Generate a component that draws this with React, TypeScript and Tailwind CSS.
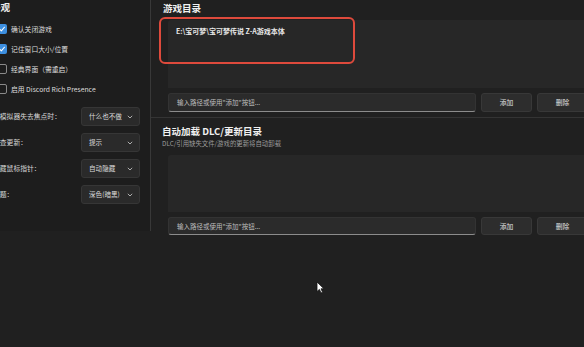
import React from "react";

const font = { fontFamily: '"Noto Sans CJK SC", "Noto Sans", sans-serif' };

function Check({ checked }: { checked: boolean }) {
  return checked ? (
    <div className="w-[10px] h-[10px] rounded-[2px] bg-[#3d8fe0] flex items-center justify-center shrink-0">
      <svg width="8" height="8" viewBox="0 0 10 10">
        <path d="M2 5.2 L4.2 7.3 L8 2.8" stroke="white" strokeWidth="1.4" fill="none" strokeLinecap="round" strokeLinejoin="round" />
      </svg>
    </div>
  ) : (
    <div className="w-[10px] h-[10px] rounded-[2px] border border-[#8a8a8a] shrink-0" />
  );
}

function Select({ value }: { value: string }) {
  return (
    <div className="w-[59px] h-[19px] rounded-[3px] bg-[#2a2a2a] border border-[#363636] flex items-center justify-between pl-[7px] pr-[6px] shrink-0">
      <span className="text-[6.6px] text-[#dcdcdc] leading-none whitespace-nowrap">{value}</span>
      <svg width="6" height="4" viewBox="0 0 6 4">
        <path d="M0.8 0.8 L3 3 L5.2 0.8" stroke="#bdbdbd" strokeWidth="0.9" fill="none" />
      </svg>
    </div>
  );
}

function InputRow({ h }: { h: number }) {
  return (
    <div className="flex ml-[17px] gap-[5px]" style={{ height: h }}>
      <div className="w-[308px] shrink-0 rounded-[3px] bg-[#2b2b2b] border border-[#333] border-b-[#8c8c8c] flex items-center pl-[8px]">
        <span className="text-[6.5px] text-[#bdbdbd] whitespace-nowrap leading-none">输入路径或使用"添加"按钮...</span>
      </div>
      <div className="w-[51px] shrink-0 rounded-[3px] bg-[#2d2d2d] border border-[#383838] flex items-center justify-center">
        <span className="text-[6.8px] text-[#e0e0e0] leading-none">添加</span>
      </div>
      <div className="w-[51px] shrink-0 rounded-[3px] bg-[#2d2d2d] border border-[#383838] flex items-center justify-center">
        <span className="text-[6.8px] text-[#e0e0e0] leading-none">删除</span>
      </div>
    </div>
  );
}

export default function App() {
  const checks: [boolean, string][] = [
    [true, "确认关闭游戏"],
    [true, "记住窗口大小/位置"],
    [false, "经典界面（需重启）"],
    [false, "启用 Discord Rich Presence"],
  ];
  const rows: [string, string][] = [
    ["当模拟器失去焦点时：", "什么也不做"],
    ["检查更新：", "提示"],
    ["隐藏鼠标指针：", "自动隐藏"],
    ["主题：", "深色(暗黑)"],
  ];
  return (
    <div style={font} className="w-[584px] h-[347px] bg-[#202020] flex overflow-hidden relative">
      {/* left panel */}
      <div className="w-[151px] h-[231px] shrink-0 overflow-hidden bg-[#1d1d1d] border-r border-[#383838]">
        <div className="ml-[-9px] w-[170px]">
          <div className="h-[16px] flex items-center text-[9.5px] font-bold text-[#eeeeee] leading-none">外观</div>
          <div className="mt-[8px] ml-[6px] flex flex-col gap-[10px]">
            {checks.map(([c, t]) => (
              <div key={t} className="h-[10px] flex items-center gap-[4px]">
                <Check checked={c} />
                <span className="text-[6.8px] text-[#dedede] leading-none whitespace-nowrap">{t}</span>
              </div>
            ))}
          </div>
          <div className="mt-[13px] ml-[2px] flex flex-col gap-[7px]">
            {rows.map(([l, v]) => (
              <div key={l} className="h-[19px] flex items-center">
                <span className="w-[88px] shrink-0 text-[6.8px] text-[#d6d6d6] leading-none whitespace-nowrap">{l}</span>
                <Select value={v} />
              </div>
            ))}
          </div>
        </div>
      </div>

      {/* right panel */}
      <div className="flex-1 overflow-hidden flex flex-col">
        <div className="h-[18px] flex items-center pl-[12px] text-[9.5px] font-bold text-[#f0f0f0] leading-none">游戏目录</div>
        <div className="mt-[2px] ml-[17px] h-[68px] bg-[#272727] rounded-tl-[3px]" />
        <div className="mt-[5px]">
          <InputRow h={19} />
        </div>
        <div className="mt-[5px] h-px bg-[#343434]" />
        <div className="mt-[7px] h-[13px] flex items-center pl-[11px] text-[9.5px] font-bold text-[#f0f0f0] leading-none whitespace-nowrap">
          自动加载 DLC/更新目录
        </div>
        <div className="mt-[1px] h-[10px] flex items-center pl-[11px] text-[6.4px] text-[#9c9c9c] leading-none whitespace-nowrap">
          DLC/引用缺失文件/游戏的更新将自动卸载
        </div>
        <div className="mt-[6px] ml-[17px] h-[57px] bg-[#272727] rounded-tl-[3px]" />
        <div className="mt-[5px]">
          <InputRow h={18} />
        </div>
      </div>

      {/* red annotation box */}
      <div className="absolute left-[159px] top-[17px] w-[196px] h-[47px] rounded-[6px] border-[2.5px] border-[#de4a3c] flex items-start pl-[15px] pt-[9px]">
        <span className="text-[7px] font-bold text-[#e8e8e8] leading-none whitespace-nowrap">E:\宝可梦\宝可梦传说 Z-A游戏本体</span>
      </div>

      {/* mouse cursor */}
      <svg className="absolute left-[316px] top-[281px]" width="9" height="13" viewBox="0 0 9 13">
        <path d="M1 1 L1 10.5 L3.4 8.4 L5 12 L6.6 11.3 L5 7.8 L8 7.8 Z" fill="white" stroke="#111" strokeWidth="0.8" />
      </svg>
    </div>
  );
}
